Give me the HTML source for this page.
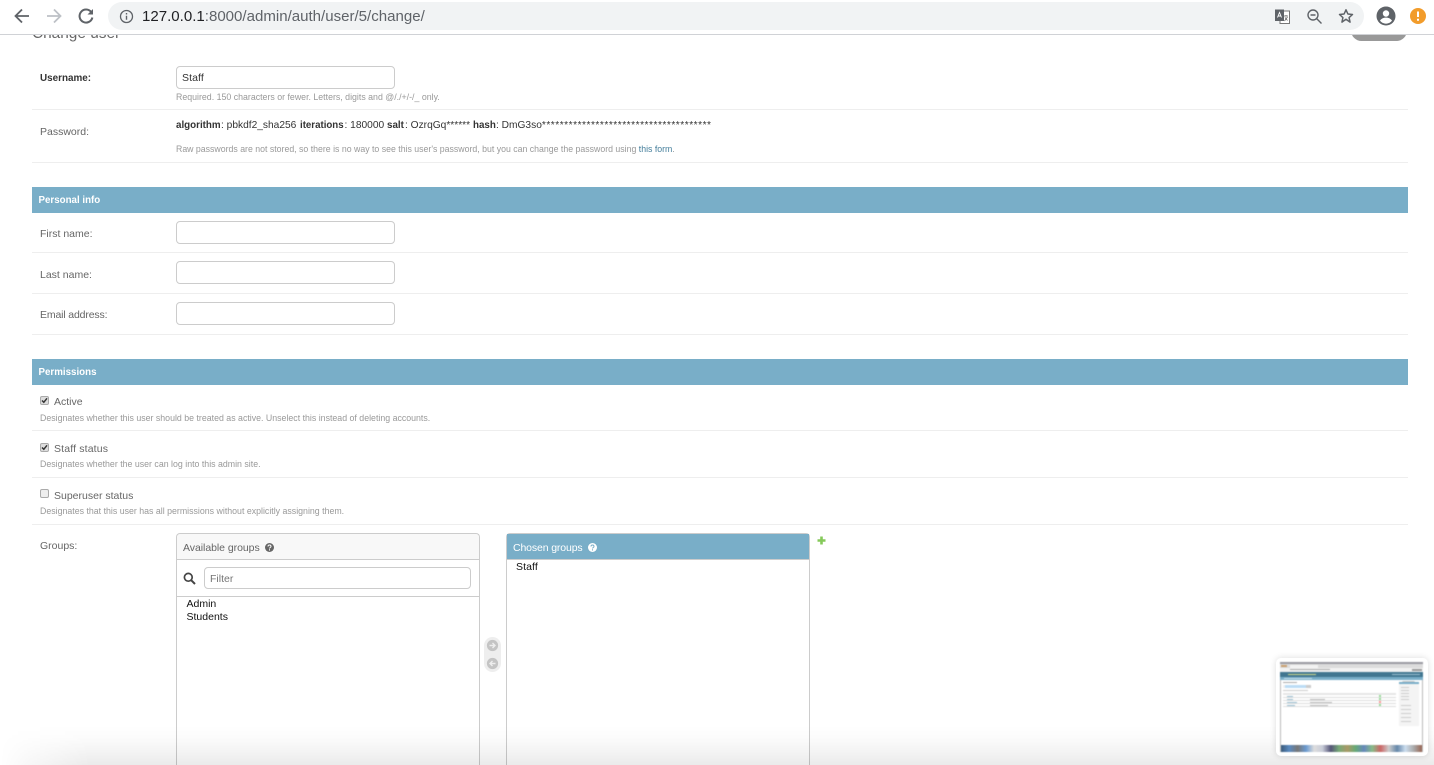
<!DOCTYPE html>
<html><head><meta charset="utf-8"><title>Change user</title>
<style>
html,body{margin:0;padding:0;background:#fff;overflow:hidden;}
#p{position:relative;width:1434px;height:765px;overflow:hidden;background:#fff;font-family:"Liberation Sans",sans-serif;}
#p div,#p svg{position:absolute;}
.t{white-space:nowrap;line-height:14px;}
.l{font-size:10.5px;color:#666;left:40px;}
.h{font-size:8.8px;color:#999;left:40px;}
.i{left:176px;width:217px;height:21px;border:1px solid #ccc;border-radius:4px;background:#fff;}
.r{left:32px;width:1376px;height:1px;background:#eee;}
.b{left:32px;width:1376px;height:26px;background:#79aec8;}
.bt{color:#fff;font-size:9.75px;left:38.5px;font-weight:bold;}
.c{left:40px;width:7px;height:7px;border:1px solid #aaa;border-radius:2px;background:#ddd;}
.pw{font-size:10.2px;color:#333;}
.pb{font-size:9.8px;color:#333;font-weight:bold;}
.s{height:1px;background:#ddd;}
</style></head><body><div id="p">
<div class="t" style="left:32px;top:27px;font-size:15.4px;color:#666;">Change user</div>
<div style="left:1351px;top:20px;width:56px;height:21px;border-radius:11px;background:#999;"></div>
<div style="left:0;top:0;width:1434px;height:34px;background:#fff;"></div>
<div style="left:0;top:34px;width:1434px;height:1px;background:#d0d2d6;"></div>
<div style="left:108px;top:2px;width:1256px;height:28px;border-radius:14px;background:#f1f3f4;"></div>
<svg style="left:12px;top:6px" width="20" height="20" viewBox="0 0 20 20"><path d="M17 10H4M10 3.500L3.500 10l6.500 6.500" fill="none" stroke="#5f6368" stroke-width="1.800"/></svg>
<svg style="left:44px;top:6px" width="20" height="20" viewBox="0 0 20 20"><path d="M3 10h13M10 3.500L16.500 10 10 16.500" fill="none" stroke="#bdc1c6" stroke-width="1.800"/></svg>
<svg style="left:76px;top:6px" width="20" height="20" viewBox="0 0 20 20"><path d="M15.300 6.200A6.500 6.500 0 1 0 16.400 11.500" fill="none" stroke="#5f6368" stroke-width="2"/><path d="M17 3V8.500H11.500Z" fill="#5f6368"/></svg>
<svg style="left:119px;top:9px" width="15" height="15" viewBox="0 0 15 15"><circle cx="7.500" cy="7.500" r="6" fill="none" stroke="#5f6368" stroke-width="1.300"/><path d="M7.500 6.800v4M7.500 4v1.500" stroke="#5f6368" stroke-width="1.400"/></svg>
<div class="t" style="left:142px;top:8px;font-size:15.05px;line-height:17px;color:#5f6368;"><span style="color:#202124">127.0.0.1</span>:8000/admin/auth/user/5/change/</div>
<svg style="left:1274px;top:8px" width="17" height="17" viewBox="0 0 17 17"><rect x="6" y="3" width="9.500" height="12.500" fill="#fff" stroke="#777" stroke-width="1"/><rect x="1" y="1.500" width="9" height="11.500" fill="#5f6368"/><path d="M3.500 9.500L5.500 4.500l2 5M4.200 8h2.600" stroke="#fff" stroke-width=".9" fill="none"/><path d="M10 8h4M12 7v1M10.500 13l3-4M11 9.500l2.500 3" stroke="#666" stroke-width=".8" fill="none"/></svg>
<svg style="left:1306px;top:8px" width="17" height="17" viewBox="0 0 17 17"><circle cx="7" cy="7" r="5" fill="none" stroke="#5f6368" stroke-width="1.400"/><path d="M4.500 7h5M10.800 10.800l4.700 4.700" stroke="#5f6368" stroke-width="1.400"/></svg>
<svg style="left:1338px;top:8px" width="16" height="16" viewBox="0 0 16 16"><path d="M8 1.800l1.900 4.200 4.600.5-3.400 3.100.95 4.500L8 11.300l-4.050 2.800.95-4.500L1.500 6.500l4.600-.5z" fill="none" stroke="#5f6368" stroke-width="1.500" stroke-linejoin="round"/></svg>
<svg style="left:1376px;top:6px" width="20" height="20" viewBox="0 0 20 20"><circle cx="10" cy="10" r="9.500" fill="#5f6368"/><circle cx="10" cy="7.500" r="3.200" fill="#fff"/><path d="M4 14.600c1.400-2.200 3.800-3 6-3s4.600.8 6 3c-1.400 1.900-3.600 3-6 3s-4.600-1.100-6-3z" fill="#fff"/></svg>
<svg style="left:1410px;top:8px" width="16" height="16" viewBox="0 0 16 16"><circle cx="8" cy="8" r="8" fill="#f29c2b"/><path d="M8 3.500v5.500M8 10.700v2" stroke="#fff" stroke-width="2"/></svg>

<div class="t l" style="top:72px;font-weight:bold;color:#333;font-size:9.9px;">Username:</div>
<div class="i" style="top:66px;"></div>
<div class="t" style="left:182px;top:71px;font-size:10.5px;color:#333;letter-spacing:.1px;">Staff</div>
<div class="t h" style="left:176px;top:90px;">Required. 150 characters or fewer. Letters, digits and @/./+/-/_ only.</div>
<div class="r" style="top:109px;"></div>
<div class="t l" style="top:125px;">Password:</div>
<div class="t pb" style="left:176px;top:119px;">algorithm</div>
<div class="t pw" style="left:221px;top:119px;">: pbkdf2_sha256</div>
<div class="t pb" style="left:300px;top:119px;font-size:9.7px;">iterations</div>
<div class="t pw" style="left:344.5px;top:119px;">: 180000</div>
<div class="t pb" style="left:387px;top:119px;">salt</div>
<div class="t pw" style="left:405px;top:119px;">: OzrqGq******</div>
<div class="t pb" style="left:473px;top:119px;">hash</div>
<div class="t pw" style="left:496px;top:119px;">: DmG3so<span style="letter-spacing:.5px">**************************************</span></div>
<div class="t h" style="left:176px;top:142px;font-size:8.75px;">Raw passwords are not stored, so there is no way to see this user's password, but you can change the password using <span style="color:#447e9b">this form</span>.</div>
<div class="r" style="top:162px;"></div>

<div class="b" style="top:187px;"></div>
<div class="t bt" style="top:193px;top:193.500px;">Personal info</div>
<div class="t l" style="top:227px;">First name:</div>
<div class="i" style="top:221px;"></div>
<div class="r" style="top:252px;"></div>
<div class="t l" style="top:268px;">Last name:</div>
<div class="i" style="top:261px;"></div>
<div class="r" style="top:293px;"></div>
<div class="t l" style="top:308px;letter-spacing:-.15px;">Email address:</div>
<div class="i" style="top:302px;"></div>
<div class="r" style="top:334px;"></div>

<div class="b" style="top:359px;"></div>
<div class="t bt" style="top:365.500px;">Permissions</div>
<div class="c" style="top:396px;"></div>
<svg style="left:40px;top:396px" width="9" height="9" viewBox="0 0 9 9"><path d="M2 4.500l1.800 1.800 3.200-4" fill="none" stroke="#333" stroke-width="1.500"/></svg>
<div class="t l" style="left:54px;top:395px;">Active</div>
<div class="t h" style="top:411px;">Designates whether this user should be treated as active. Unselect this instead of deleting accounts.</div>
<div class="r" style="top:430px;"></div>
<div class="c" style="top:443px;"></div>
<svg style="left:40px;top:443px" width="9" height="9" viewBox="0 0 9 9"><path d="M2 4.500l1.800 1.800 3.200-4" fill="none" stroke="#333" stroke-width="1.500"/></svg>
<div class="t l" style="left:54px;top:442px;letter-spacing:.15px;">Staff status</div>
<div class="t h" style="top:457px;">Designates whether the user can log into this admin site.</div>
<div class="r" style="top:477px;"></div>
<div class="c" style="top:489px;background:#eee;"></div>
<div class="t l" style="left:54px;top:489px;">Superuser status</div>
<div class="t h" style="top:504px;">Designates that this user has all permissions without explicitly assigning them.</div>
<div class="r" style="top:524px;"></div>

<div class="t l" style="top:539px;">Groups:</div>
<div style="left:176px;top:533px;width:302px;height:232px;border:1px solid #ccc;border-bottom:0;border-radius:4px 4px 0 0;"></div>
<div style="left:177px;top:534px;width:302px;height:25px;background:#f8f8f8;border-bottom:1px solid #ccc;border-radius:4px 4px 0 0;"></div>
<div class="t" style="left:183px;top:541px;font-size:10.5px;color:#666;letter-spacing:-.05px;">Available groups</div>
<svg style="left:265px;top:543px" width="9" height="9" viewBox="0 0 9 9"><circle cx="4.500" cy="4.500" r="4.500" fill="#666"/><path d="M3 3.500c0-2 3-2 3 0 0 1-1.500 1-1.500 2M4.500 6.300v1.200" stroke="#fff" fill="none" stroke-width="1"/></svg>
<div style="left:177px;top:560px;width:302px;height:36px;background:#fff;border-bottom:1px solid #ccc;"></div>
<svg style="left:183px;top:572px" width="13" height="13" viewBox="0 0 13 13"><circle cx="5.300" cy="5.300" r="3.900" fill="none" stroke="#444" stroke-width="1.700"/><path d="M8.200 8.200l3.800 3.800" stroke="#444" stroke-width="2"/></svg>
<div style="left:204px;top:567px;width:265px;height:20px;border:1px solid #ccc;border-radius:4px;background:#fff;"></div>
<div class="t" style="left:210px;top:572px;font-size:10.5px;color:#757575;">Filter</div>
<div class="t" style="left:186.5px;top:598px;font-size:10.5px;line-height:13px;color:#111;">Admin<br>Students</div>

<div style="left:484px;top:637px;width:17px;height:35px;border-radius:9px;background:#eee;"></div>
<svg style="left:486px;top:639px" width="13" height="13" viewBox="0 0 13 13"><circle cx="6.500" cy="6.500" r="5.600" fill="#c4c4c4"/><path d="M3.500 6.500h5.500M6.500 4L9 6.500 6.500 9" fill="none" stroke="#eee" stroke-width="1.400"/></svg>
<svg style="left:486px;top:657px" width="13" height="13" viewBox="0 0 13 13"><circle cx="6.500" cy="6.500" r="5.600" fill="#c4c4c4"/><path d="M9.500 6.500H4M6.500 4L4 6.500 6.500 9" fill="none" stroke="#eee" stroke-width="1.400"/></svg>

<div style="left:506px;top:533px;width:302px;height:232px;border:1px solid #ccc;border-bottom:0;border-radius:4px 4px 0 0;"></div>
<div style="left:507px;top:534px;width:302px;height:25px;background:#79aec8;border-bottom:1px solid #ccc;"></div>
<div class="t" style="left:513px;top:541px;font-size:10.5px;color:#fff;letter-spacing:-.13px;">Chosen groups</div>
<svg style="left:588px;top:543px" width="9" height="9" viewBox="0 0 9 9"><circle cx="4.500" cy="4.500" r="4.500" fill="#fff"/><path d="M3 3.500c0-2 3-2 3 0 0 1-1.500 1-1.500 2M4.500 6.300v1.200" stroke="#79aec8" fill="none" stroke-width="1"/></svg>
<div class="t" style="left:516px;top:561px;font-size:10.5px;line-height:13px;color:#111;letter-spacing:.1px;">Staff</div>
<svg style="left:817px;top:536px" width="9" height="9" viewBox="0 0 9 9"><path d="M4.500 .5v8M.5 4.500h8" stroke="#85c95a" stroke-width="2.600"/></svg>

<div style="left:0;top:725px;width:1434px;height:40px;background:linear-gradient(to bottom,rgba(0,0,0,0) 0%,rgba(0,0,0,.012) 30%,rgba(0,0,0,.04) 60%,rgba(0,0,0,.08) 100%);-webkit-mask-image:linear-gradient(to right,transparent 0,rgba(0,0,0,.4) 30px,#000 90px);mask-image:linear-gradient(to right,transparent 0,rgba(0,0,0,.4) 30px,#000 90px);"></div>

<div style="left:1276px;top:658px;width:152px;height:98px;background:#fff;border-radius:5px;box-shadow:0 0 7px rgba(0,0,0,.14);overflow:hidden;">
<div style="left:4px;top:4px;width:143px;height:90px;background:#fff;overflow:hidden;filter:blur(.6px);">
<div style="left:0;top:0;width:1px;height:90px;background:#bbb;"></div>
<div style="left:142px;top:0;width:1px;height:90px;background:#bbb;"></div>
<div style="left:0;top:0;width:143px;height:2px;background:#9a9aa2;"></div>
<div style="left:0;top:2px;width:143px;height:4px;background:#dcdcdc;"></div>
<div style="left:1px;top:3px;width:6px;height:2px;background:#c9a070;"></div>
<div style="left:10px;top:3px;width:28px;height:3px;background:#f2f2f2;"></div>
<div style="left:0;top:6px;width:143px;height:4px;background:#f2f2f2;"></div>
<div style="left:10px;top:7px;width:40px;height:1px;background:#aaa;"></div>
<div style="left:132px;top:7px;width:10px;height:2px;background:#999;"></div>
<div style="left:0;top:10px;width:143px;height:5px;background:#417690;"></div>
<div style="left:8px;top:12px;width:28px;height:1px;background:#cfd98a;"></div>
<div style="left:112px;top:12px;width:28px;height:1px;background:#9cc0d2;"></div>
<div style="left:0;top:15px;width:143px;height:3px;background:#79aec8;"></div>
<div style="left:4px;top:16px;width:28px;height:1px;background:#c5deea;"></div>
<div style="left:3px;top:20px;width:14px;height:1px;background:#aaa;"></div>
<div style="left:122px;top:19px;width:13px;height:3px;background:#c4c4c4;border-radius:2px;"></div>
<div style="left:3px;top:23px;width:23px;height:3px;background:#f0f0f0;"></div>
<div style="left:5px;top:23px;width:21px;height:3px;background:#bcdcf5;"></div>
<div style="left:26px;top:23px;width:5px;height:3px;background:#ccc;"></div>
<div style="left:3px;top:28px;width:25px;height:1px;background:#ccc;"></div>
<div style="left:3px;top:31px;width:113px;height:2px;background:#e6e6e6;"></div>
<div class="s" style="left:3px;top:35px;width:113px;"></div>
<div class="s" style="left:3px;top:38px;width:113px;"></div>
<div class="s" style="left:3px;top:41px;width:113px;"></div>
<div class="s" style="left:3px;top:44px;width:113px;"></div>
<div style="left:7px;top:33.500px;width:6px;height:1px;background:#9cc0d2;"></div>
<div style="left:7px;top:36.500px;width:6px;height:1px;background:#9cc0d2;"></div>
<div style="left:7px;top:39.500px;width:10px;height:1px;background:#9cc0d2;"></div>
<div style="left:7px;top:42.500px;width:8px;height:1px;background:#9cc0d2;"></div>
<div style="left:30px;top:36.500px;width:15px;height:1px;background:#bbb;"></div>
<div style="left:30px;top:39.500px;width:22px;height:1px;background:#bbb;"></div>
<div style="left:30px;top:42.500px;width:18px;height:1px;background:#bbb;"></div>
<div style="left:99px;top:33px;width:2px;height:2px;background:#9d9;"></div>
<div style="left:99px;top:36px;width:2px;height:2px;background:#9d9;"></div>
<div style="left:99px;top:39px;width:2px;height:2px;background:#f99;"></div>
<div style="left:99px;top:42px;width:2px;height:2px;background:#9d9;"></div>
<div style="left:119px;top:20px;width:20px;height:44px;background:#f4f4f4;"></div>
<div style="left:119px;top:20px;width:20px;height:2px;background:#79aec8;"></div>
<div style="left:121px;top:25px;width:8px;height:14px;background:repeating-linear-gradient(#ccc 0 1px,transparent 1px 3px);"></div>
<div style="left:121px;top:43px;width:10px;height:18px;background:repeating-linear-gradient(#ccc 0 1px,transparent 1px 4px);"></div>
<div style="left:1px;top:83px;width:141px;height:7px;background:linear-gradient(to right,#3a5a7a,#5a8ac0,#777,#6a9ad0,#ddd,#c8ccd8,#557,#7a7,#a96,#6a7,#68b,#8b8,#c66,#ccc,#68a,#cde,#aaa,#965);"></div>
</div></div>
</div></body></html>
